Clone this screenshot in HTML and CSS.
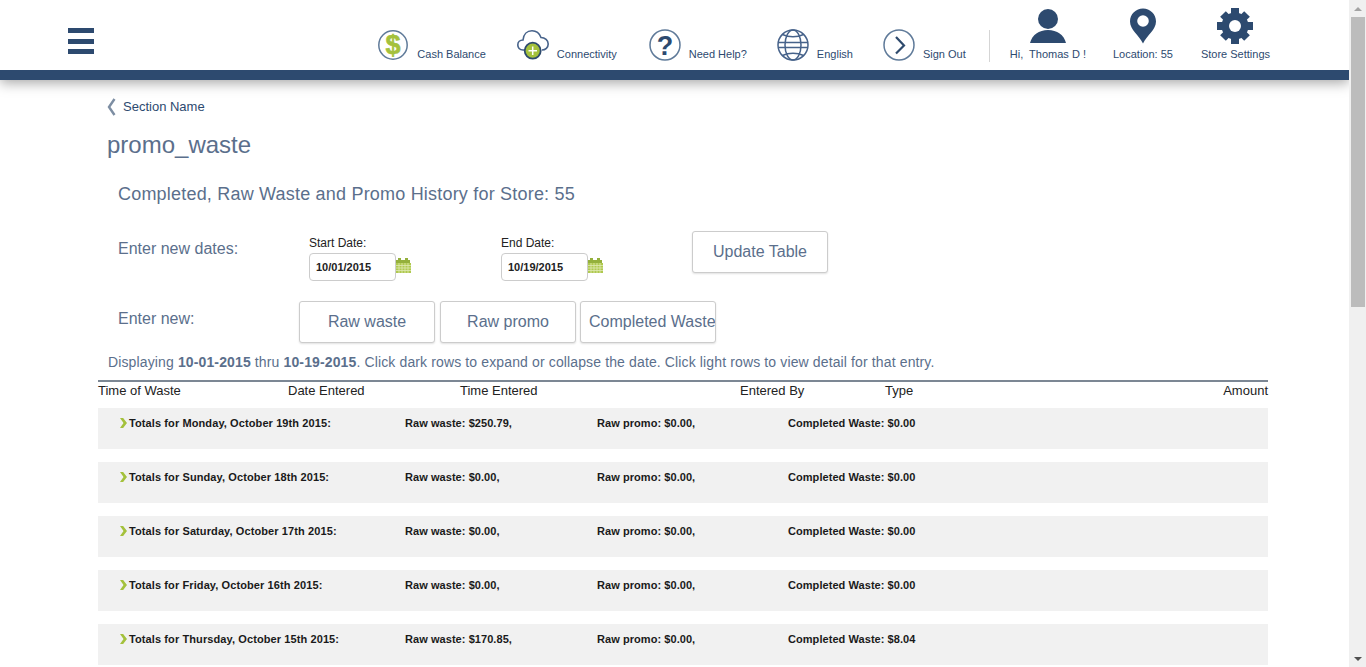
FILE: index.html
```html
<!DOCTYPE html>
<html>
<head>
    <meta charset="UTF-8">
    <title>promo_waste</title>
    <link rel="stylesheet" href="styles.css">
</head>
<body>
<div class="app">
<div class="page">
    <header class="topbar">
        <div class="menu-icon"><span></span><span></span><span></span></div>
        <nav class="nav">
            <a class="nav-item cash">
                <svg width="30" height="30" viewBox="0 0 30 30"><circle cx="15" cy="15" r="14.200" fill="#fff" stroke="#5f7a99" stroke-width="1.500"/><text x="15" y="23.500" text-anchor="middle" class="dollar">$</text></svg>
                <span>Cash Balance</span>
            </a>
            <a class="nav-item conn">
                <svg width="32" height="32" viewBox="0 0 32 32"><path d="M8 21H6C2.500 21 .8 18.500 .8 16 .8 13 3 11 6 11 6.500 5.500 10 1.800 15 1.800c4.500 0 7.500 2.700 9 6.700 4 0 7.200 3 7.200 6.500s-2.800 6-6.200 6" fill="none" stroke="#46628a" stroke-width="1.600"/><circle cx="15.700" cy="21.700" r="8" fill="#a4c13c" stroke="#2e4a6d" stroke-width="1.800"/><path d="M15.700 17.500v8.500M11.500 21.700h8.500" stroke="#fff" stroke-width="1.500"/></svg>
                <span>Connectivity</span>
            </a>
            <a class="nav-item help">
                <svg width="32" height="32" viewBox="0 0 32 32"><circle cx="16" cy="16" r="15" fill="#fff" stroke="#5f7a99" stroke-width="1.500"/><text x="16" y="25.500" text-anchor="middle" class="quest">?</text></svg>
                <span>Need Help?</span>
            </a>
            <a class="nav-item lang">
                <svg width="32" height="32" viewBox="0 0 32 32" fill="none" stroke="#46628a" stroke-width="1.500"><circle cx="16" cy="16" r="15"/><ellipse cx="16" cy="16" rx="8" ry="15"/><path d="M1.500 13.500h29M1.500 18.500h29M5.500 5.500c6 3 15 3 21 0M5.500 26.500c6-3 15-3 21 0"/></svg>
                <span>English</span>
            </a>
            <a class="nav-item out">
                <svg width="32" height="32" viewBox="0 0 32 32" fill="none"><circle cx="16" cy="16" r="15" stroke="#5f7a99" stroke-width="1.500"/><path d="M13 8l8 8.500-8 8" stroke="#2e4a6d" stroke-width="2.200"/></svg>
                <span>Sign Out</span>
            </a>
            <div class="nav-sep"></div>
            <a class="nav-col user">
                <svg width="36" height="36" viewBox="0 0 36 36"><circle cx="18" cy="11" r="10" fill="#2d4a6f"/><path d="M0 35C2 27 9 22 18 22s16 5 18 13z" fill="#2d4a6f"/></svg>
                <span>Hi,&nbsp; Thomas D !</span>
            </a>
            <a class="nav-col loc">
                <svg width="28" height="36" viewBox="0 0 28 36"><path fill-rule="evenodd" d="M14 35.500C10 27 1 22 1 13.500 1 6 7 .5 14 .5s13 5.500 13 13C27 22 18 27 14 35.500zM14 7.200a5.800 5.800 0 1 0 0 11.600 5.800 5.800 0 0 0 0-11.600z" fill="#2d4a6f"/></svg>
                <span>Location: 55</span>
            </a>
            <a class="nav-col store">
                <svg width="36" height="36" viewBox="0 0 36 36" fill="#2d4a6f">
                    <circle cx="18" cy="18" r="13.500"/>
                    <rect x="14" y="0" width="8" height="36"/>
                    <rect x="0" y="14" width="36" height="8"/>
                    <rect x="14" y="1" width="8" height="34" transform="rotate(45 18 18)"/>
                    <rect x="14" y="1" width="8" height="34" transform="rotate(-45 18 18)"/>
                    <circle cx="18" cy="18" r="6" fill="#fff"/>
                </svg>
                <span>Store Settings</span>
            </a>
        </nav>
    </header>

    <main class="content">
        <div class="crumb">
            <svg width="9" height="18" viewBox="0 0 9 18"><path d="M7.500 1L2 9l5.500 8" fill="none" stroke="#7d8ea3" stroke-width="2.400"/></svg>
            <span>Section Name</span>
        </div>
        <h1 class="title">promo_waste</h1>
        <h2 class="subtitle">Completed, Raw Waste and Promo History for Store: 55</h2>

        <div class="dates-row">
            <div class="row-label">Enter new dates:</div>
            <div class="date-field start">
                <label>Start Date:</label>
                <div class="date-input">
                    <input type="text" value="10/01/2015">
                    <svg class="cal" width="16" height="17" viewBox="0 0 16 17"><use href="#cal-icon"/></svg>
                </div>
            </div>
            <div class="date-field end">
                <label>End Date:</label>
                <div class="date-input">
                    <input type="text" value="10/19/2015">
                    <svg class="cal" width="16" height="17" viewBox="0 0 16 17"><use href="#cal-icon"/></svg>
                </div>
            </div>
            <button class="btn update">Update Table</button>
        </div>

        <div class="new-row">
            <div class="row-label">Enter new:</div>
            <div class="new-buttons">
                <button class="btn">Raw waste</button>
                <button class="btn">Raw promo</button>
                <button class="btn">Completed Waste</button>
            </div>
        </div>

        <p class="hint">Displaying <b>10-01-2015</b> thru <b>10-19-2015</b>. Click dark rows to expand or collapse the date. Click light rows to view detail for that entry.</p>

        <div class="table">
            <div class="table-head">
                <span>Time of Waste</span>
                <span>Date Entered</span>
                <span>Time Entered</span>
                <span>Entered By</span>
                <span>Type</span>
                <span>Amount</span>
            </div>
            <div class="day-row"><i class="arrow"></i><span class="day">Totals for Monday, October 19th 2015:</span><span>Raw waste: $250.79,</span><span>Raw promo: $0.00,</span><span>Completed Waste: $0.00</span></div>
            <div class="day-row"><i class="arrow"></i><span class="day">Totals for Sunday, October 18th 2015:</span><span>Raw waste: $0.00,</span><span>Raw promo: $0.00,</span><span>Completed Waste: $0.00</span></div>
            <div class="day-row"><i class="arrow"></i><span class="day">Totals for Saturday, October 17th 2015:</span><span>Raw waste: $0.00,</span><span>Raw promo: $0.00,</span><span>Completed Waste: $0.00</span></div>
            <div class="day-row"><i class="arrow"></i><span class="day">Totals for Friday, October 16th 2015:</span><span>Raw waste: $0.00,</span><span>Raw promo: $0.00,</span><span>Completed Waste: $0.00</span></div>
            <div class="day-row"><i class="arrow"></i><span class="day">Totals for Thursday, October 15th 2015:</span><span>Raw waste: $170.85,</span><span>Raw promo: $0.00,</span><span>Completed Waste: $8.04</span></div>
        </div>
    </main>
</div>

<div class="scrollbar">
    <div class="sb-up"></div>
    <div class="sb-thumb"></div>
    <div class="sb-down"></div>
</div>
</div>

<svg class="defs" width="0" height="0">
    <symbol id="cal-icon" viewBox="0 0 16 17">
        <path d="M1 3h2V1h3v2h4V1h3v2h2v4H1z" fill="#94b03c"/>
        <rect x="1" y="6" width="15" height="10" fill="#afc94f"/>
        <path d="M1 8.500h15M1 11h15M1 13.500h15M4 6v10M7 6v10M10 6v10M13 6v10" stroke="#dfeab4" stroke-width=".8"/>
    </symbol>
</svg>
</body>
</html>
```

FILE: styles.css
```css
html, body {
    margin: 0;
    height: 100%;
    overflow: hidden;
}
body {
    font-family: "Liberation Sans", Arial, sans-serif;
    color: #5b6f8c;
    background: #fff;
}
.defs {
    display: block;
}
.app {
    display: flex;
    height: 667px;
    overflow: hidden;
}
.page {
    flex: 1;
    min-width: 0;
}

/* top bar */
.topbar {
    height: 70px;
    border-bottom: 10px solid #2d4a6f;
    box-shadow: 0 3px 12px rgba(0, 0, 0, .35);
    display: flex;
    justify-content: space-between;
    background: #fff;
    padding-left: 68px;
    padding-right: 79px;
}
.menu-icon {
    display: flex;
    flex-direction: column;
    gap: 5.5px;
    width: 26px;
    padding-top: 28px;
}
.menu-icon span {
    display: block;
    height: 5px;
    background: #2d4a6f;
}
.nav {
    display: flex;
    align-items: flex-end;
}
.nav-item, .nav-col {
    font-size: 11px;
    color: #2d4a6f;
    line-height: 13px;
}
.nav-item {
    display: flex;
    align-items: flex-end;
    gap: 8px;
    padding-bottom: 9px;
}
.nav-item svg {
    display: block;
}
.cash { margin-right: 31px; gap: 9px; }
.cash svg { margin-bottom: 1px; }
.conn { margin-right: 32px; }
.help { margin-right: 30px; }
.lang { margin-right: 30px; }
.out { margin-right: 23px; }
.nav-sep {
    width: 1px;
    height: 32px;
    background: #d5d5d5;
    margin: 0 20px 8px 0;
}
.nav-col {
    display: flex;
    flex-direction: column;
    align-items: center;
    padding-bottom: 9px;
    gap: 4px;
}
.user { margin-right: 27px; }
.loc { margin-right: 28px; }
.dollar {
    font: bold 27px "Liberation Sans", sans-serif;
    fill: #a4c13c;
    stroke: #a4c13c;
    stroke-width: .6;
}
.quest {
    font: bold 27px "Liberation Sans", sans-serif;
    fill: #2d4a6f;
}

/* content */
.content {
    padding: 0 81px 0 98px;
}
.crumb {
    display: flex;
    align-items: center;
    gap: 7px;
    padding: 18px 0 0 9px;
    font-size: 13px;
    line-height: 18px;
    color: #2d4a6f;
}
.title {
    margin: 14px 0 0 9px;
    font-size: 24px;
    line-height: 30px;
    font-weight: normal;
    color: #5b6f8c;
}
.subtitle {
    margin: 22px 0 0 20px;
    font-size: 18px;
    line-height: 24px;
    font-weight: normal;
    letter-spacing: .2px;
    color: #5b6f8c;
}
.row-label {
    font-size: 16px;
    line-height: 20px;
    width: 181px;
    flex: none;
}
.dates-row {
    display: flex;
    margin: 25px 0 0 20px;
    height: 56px;
}
.dates-row .row-label {
    width: 191px;
    padding-top: 8px;
}
.date-field {
    font-size: 12px;
    color: #222;
    padding-top: 5px;
}
.date-field label {
    display: block;
    line-height: 15px;
    margin-bottom: 2px;
}
.date-field.start { width: 192px; }
.date-field.end { width: 191px; }
.date-input {
    display: flex;
    align-items: center;
}
.date-input input {
    width: 87px;
    height: 28px;
    box-sizing: border-box;
    border: 1px solid #ccc;
    border-radius: 4px;
    padding: 0 6px;
    font: bold 11px "Liberation Sans", sans-serif;
    color: #222;
}
.cal {
    display: block;
    margin: -4px 0 0 -1px;
}
.btn {
    width: 136px;
    height: 42px;
    box-sizing: border-box;
    border: 1px solid #ccc;
    border-radius: 3px;
    background: #fff;
    box-shadow: 0 1px 2px rgba(0, 0, 0, .12);
    padding: 0;
    font: 16px "Liberation Sans", sans-serif;
    color: #5b6f8c;
    white-space: nowrap;
    overflow: hidden;
}
.new-row {
    display: flex;
    margin: 14px 0 0 20px;
}
.new-row .row-label {
    padding-top: 8px;
}
.new-buttons {
    display: flex;
    gap: 5px;
}
.new-buttons .btn:last-child {
    text-align: left;
    padding-left: 8px;
    margin-left: -1px;
}
.hint {
    margin: 10px 0 0 10px;
    font-size: 14px;
    line-height: 18px;
    letter-spacing: .13px;
}

/* table */
.table {
    margin-top: 9px;
}
.table-head {
    display: grid;
    grid-template-columns: 190px 172px 280px 145px 1fr auto;
    border-top: 2px solid #7c8794;
    height: 26px;
    font-size: 13px;
    line-height: 18px;
    color: #222;
}
.day-row {
    display: grid;
    grid-template-columns: 9px 276px 192px 191px 1fr;
    height: 41px;
    margin-bottom: 13px;
    padding: 8px 0 0 22px;
    box-sizing: border-box;
    background: #f1f1f1;
    font-size: 11px;
    font-weight: bold;
    line-height: 15px;
    letter-spacing: .06px;
    color: #1a1a1a;
}
.day {
    letter-spacing: .1px;
}
.arrow {
    display: block;
    width: 7px;
    height: 10px;
    margin-top: 2px;
    background: #a4c13c;
    clip-path: polygon(0 0, 45% 0, 100% 50%, 45% 100%, 0 100%, 50% 50%);
}

/* fake scrollbar, the screenshot has one */
.scrollbar {
    width: 17px;
    flex: none;
    background: #f0f0f0;
    display: flex;
    flex-direction: column;
}
.sb-up, .sb-down {
    height: 17px;
    flex: none;
    position: relative;
}
.sb-up::after, .sb-down::after {
    content: "";
    position: absolute;
    left: 5px;
    top: 7px;
    width: 0;
    height: 0;
    border-left: 4px solid transparent;
    border-right: 4px solid transparent;
}
.sb-up::after {
    border-bottom: 4px solid #a3a3a3;
}
.sb-down::after {
    border-top: 4px solid #505050;
}
.sb-thumb {
    height: 290px;
    background: #bcbcbc;
    margin: 0 1px 0 2px;
}
.sb-down {
    margin-top: auto;
}
```
